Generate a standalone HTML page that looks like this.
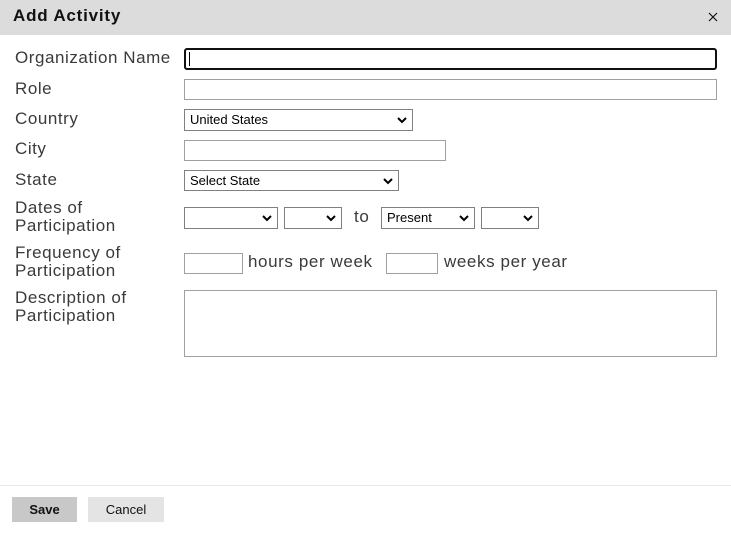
<!DOCTYPE html><html><head><style>
body{margin:0;width:731px;height:533px;position:relative;background:#fff;font-family:"Liberation Sans",sans-serif;overflow:hidden}
.a{position:absolute}
.l{position:absolute;left:15px;font-size:17px;color:#3a3a3a;line-height:18px;letter-spacing:0.55px}
.b{position:absolute;box-sizing:border-box;border:1px solid #a0a0a0;background:#fff}
.s{position:absolute;box-sizing:border-box;border:1px solid #808080;background:#fff;font-size:13px;color:#000;padding-left:5px;line-height:20px}
.s svg{position:absolute;right:5px;top:7px}
.t{position:absolute;font-size:17px;color:#3a3a3a;letter-spacing:0.6px}
</style></head><body>
<div class="a" style="left:0;top:0;width:731px;height:35px;background:#dcdcdc"></div>
<div class="a" style="left:13px;top:6px;font-size:17px;font-weight:bold;color:#111;letter-spacing:0.8px">Add Activity</div>
<svg class="a" style="left:708px;top:12px" width="10" height="10"><path d="M1 1L9 9M9 1L1 9" stroke="#111" stroke-width="1.2"/></svg>
<div class="l" style="top:49px">Organization Name</div>
<div class="l" style="top:80px">Role</div>
<div class="l" style="top:110px">Country</div>
<div class="l" style="top:140px">City</div>
<div class="l" style="top:171px">State</div>
<div class="l" style="top:199px">Dates of<br>Participation</div>
<div class="l" style="top:244px">Frequency of<br>Participation</div>
<div class="l" style="top:289px">Description of<br>Participation</div>
<div class="a" style="left:184px;top:48px;width:533px;height:22px;box-sizing:border-box;border:2px solid #111;border-radius:3px"></div>
<div class="a" style="left:189px;top:52px;width:1px;height:14px;background:#000"></div>
<div class="b" style="left:184px;top:79px;width:533px;height:21px"></div>
<div class="s" style="left:184px;top:109px;width:229px;height:22px">United States<svg width="10" height="7"><path d="M1 1L5 5L9 1" stroke="#000" stroke-width="2" fill="none"/></svg></div>
<div class="b" style="left:184px;top:140px;width:262px;height:21px"></div>
<div class="s" style="left:184px;top:170px;width:215px;height:21px">Select State<svg width="10" height="7"><path d="M1 1L5 5L9 1" stroke="#000" stroke-width="2" fill="none"/></svg></div>
<div class="s" style="left:184px;top:207px;width:94px;height:22px"><svg width="10" height="7"><path d="M1 1L5 5L9 1" stroke="#000" stroke-width="2" fill="none"/></svg></div>
<div class="s" style="left:284px;top:207px;width:58px;height:22px"><svg width="10" height="7"><path d="M1 1L5 5L9 1" stroke="#000" stroke-width="2" fill="none"/></svg></div>
<div class="t" style="left:354px;top:207px">to</div>
<div class="s" style="left:381px;top:207px;width:94px;height:22px">Present<svg width="10" height="7"><path d="M1 1L5 5L9 1" stroke="#000" stroke-width="2" fill="none"/></svg></div>
<div class="s" style="left:481px;top:207px;width:58px;height:22px"><svg width="10" height="7"><path d="M1 1L5 5L9 1" stroke="#000" stroke-width="2" fill="none"/></svg></div>
<div class="b" style="left:184px;top:253px;width:59px;height:21px"></div>
<div class="t" style="left:248px;top:252px">hours per week</div>
<div class="b" style="left:386px;top:253px;width:52px;height:21px"></div>
<div class="t" style="left:444px;top:252px">weeks per year</div>
<div class="b" style="left:184px;top:290px;width:533px;height:67px"></div>
<div class="a" style="left:0;top:485px;width:731px;height:1px;background:#e8e8e8"></div>
<div class="a" style="left:12px;top:497px;width:65px;height:25px;background:#c8c8c8;font-size:13px;font-weight:bold;text-align:center;line-height:25px;color:#111">Save</div>
<div class="a" style="left:88px;top:497px;width:76px;height:25px;background:#e4e4e4;font-size:13px;text-align:center;line-height:25px;color:#111">Cancel</div>
</body></html>
